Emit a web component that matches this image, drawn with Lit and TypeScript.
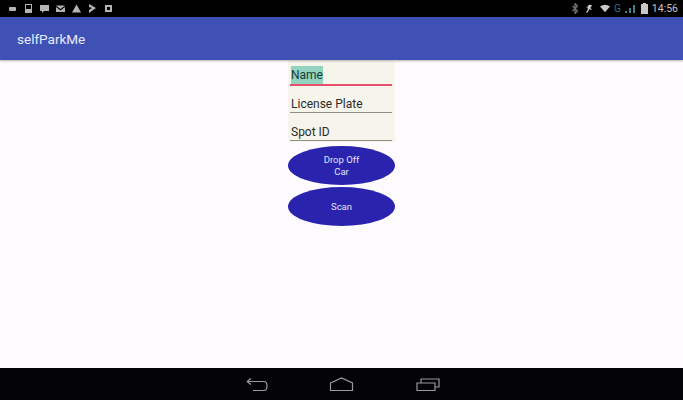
import { LitElement, html, css } from "lit";
import { customElement } from "lit/decorators.js";

@customElement("app-root")
export class AppRoot extends LitElement {
  static styles = css`
    :host { display: flex; flex-direction: column; width: 683px; height: 400px; overflow: hidden; font-family: Roboto, "Liberation Sans", sans-serif; background: #fefbff; }
    .status { height: 17px; background: #000; display: flex; align-items: center; justify-content: space-between; padding: 0 5px 0 7.5px; flex: none; }
    .left, .right { display: flex; align-items: center; }
    .left { gap: 7px; }
    .left svg { width: 9px; height: 9px; fill: #b4b4b4; }
    .right svg { height: 11px; flex: none; }
    .right { color: #c4c4c4; font-size: 10.5px; }
    .bt { width: 6px; margin-right: 7px; }
    .run { width: 8px; margin-right: 7px; }
    .wifi { width: 10px; margin-right: 4px; }
    .g { color: #2f6f8f; font-size: 10px; margin-right: 3px; }
    .sig { width: 11px; margin-right: 6px; }
    .bat { width: 7px; }
    .time { margin-left: 4px; }
    .bar { height: 43px; background: #3f51b5; color: #e6eafa; font-size: 13.5px; display: flex; align-items: center; padding-left: 17px; box-sizing: border-box; flex: none; box-shadow: 0 1px 2px rgba(0,0,0,.3); position: relative; }
    .content { flex: 1; display: flex; flex-direction: column; align-items: center; min-height: 0; }
    .form { width: 107px; margin-top: 1px; background: #f6f5ec; display: flex; flex-direction: column; padding: 0 3px 0 2px; box-sizing: border-box; height: 81px; }
    .field { height: 28px; box-sizing: border-box; border-bottom: 1px solid #8f8f88; font-size: 12px; color: #2a2a2a; display: flex; align-items: flex-end; padding: 0 0 1px 1px; flex: none; }
    .field.first { height: 25px; border-bottom: 2px solid #e5506f; padding-bottom: 0; }
    .field.second { height: 27px; }
    .sel { background: #93d4c0; color: #153c34; padding: 2px 0; width: 32px; box-sizing: border-box; }
    .buttons { display: flex; flex-direction: column; gap: 2px; margin-top: 4px; }
    .btn { width: 107px; height: 39px; border-radius: 50%; background: #2a23ad; color: #e2e2f8; font-size: 9.5px; line-height: 12px; text-align: center; display: flex; align-items: center; justify-content: center; }
    .nav { height: 32px; background: #040308; display: flex; align-items: center; justify-content: center; flex: none; }
    .nav svg { width: 225px; height: 32px; fill: none; stroke: #9a9a9a; stroke-width: 1.2; }
  `;

  render() {
    return html`
      <div class="status">
        <div class="left">
          <svg viewBox="0 0 9 9"><rect x="1" y="3" width="7" height="4" rx="1"/></svg>
          <svg viewBox="0 0 9 9"><path d="M1 0h7v9H1z M2 1v4h5V1z" fill-rule="evenodd"/></svg>
          <svg viewBox="0 0 9 9"><path d="M0 1h9v6H4L2 9V7H0z"/></svg>
          <svg viewBox="0 0 9 9"><path d="M0 1.500h9L4.500 5zM0 3l4.500 3.500L9 3v5H0z"/></svg>
          <svg viewBox="0 0 9 9"><path d="M4.500 0.500 9 8.500H0z"/></svg>
          <svg viewBox="0 0 9 9"><path d="M1 0l7 4-7 5V6l3-2-3-1z"/></svg>
          <svg viewBox="0 0 9 9"><path d="M1 1h7v7H1z M3 3v3h3V3z" fill-rule="evenodd"/></svg>
        </div>
        <div class="right">
          <svg class="bt" viewBox="0 0 6 11"><path d="M0.500 3l5 5-2.500 2.500V0.500L5.500 3l-5 5" fill="none" stroke="#6f6f6f" stroke-width="1.300"/></svg>
          <svg class="run" viewBox="0 0 9 11"><path d="M5 1 8 2 6 5 8 7H6L5 6 3 10 1 10 3 7 3 4 1 5z" fill="#c8c8c8"/></svg>
          <svg class="wifi" viewBox="0 0 12 11"><path d="M0 3Q6-1 12 3L6 10z" fill="#c8c8c8"/></svg>
          <span class="g">G</span>
          <svg class="sig" viewBox="0 0 11 11"><path d="M1 10h2V8H1zM5 10h2V5H5zM9 10h2V2H9z" fill="#3f7f8f"/></svg>
          <svg class="bat" viewBox="0 0 7 11"><path d="M2 0h3v1h2v10H0V1h2z" fill="#c8c8c8"/></svg>
          <span class="time">14:56</span>
        </div>
      </div>
      <div class="bar">selfParkMe</div>
      <div class="content">
        <div class="form">
          <div class="field first"><span class="sel">Name</span></div>
          <div class="field second">License Plate</div>
          <div class="field">Spot ID</div>
        </div>
        <div class="buttons">
          <div class="btn">Drop Off<br />Car</div>
          <div class="btn">Scan</div>
        </div>
      </div>
      <div class="nav">
        <svg viewBox="0 0 225 32">
          <path d="M18 13.500 H35 Q38 13.500 38 18 Q38 22.500 35 22.500 H24 M18 13.500 L22 10.500 M18 13.500 L22 16.500"/>
          <path d="M101.500 15 L112.500 10 L123.500 15 V22.500 H101.500 Z"/>
          <path d="M188 15 H206 V22.500 H188 Z M192 14.500 V11 H210 V19 H206.500"/>
        </svg>
      </div>
    `;
  }
}
